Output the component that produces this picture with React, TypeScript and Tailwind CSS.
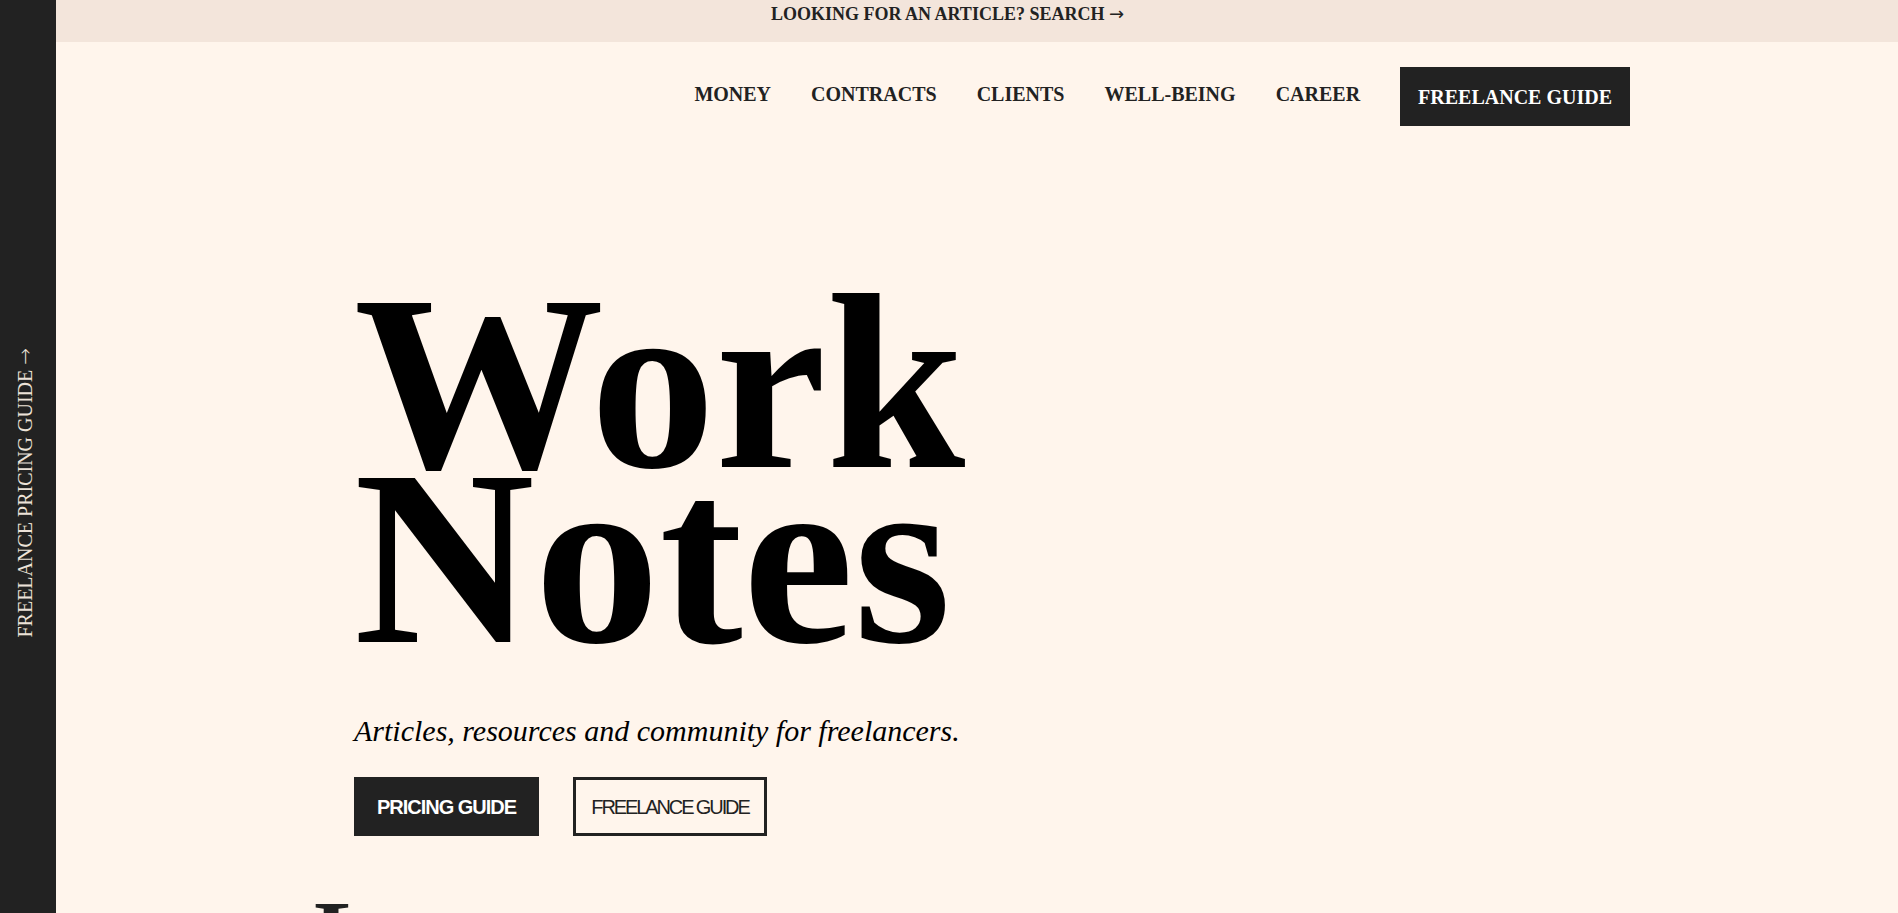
export default function App() {
  const links = ["MONEY", "CONTRACTS", "CLIENTS", "WELL-BEING", "CAREER"];
  return (
    <div className="relative h-screen overflow-hidden bg-[#fff5ec] font-['Liberation_Serif','Times_New_Roman',serif] text-[#222222]">
      {/* side tab */}
      <aside className="fixed left-0 top-0 z-10 flex h-screen w-[56px] items-center justify-center bg-[#222222] pr-[6px] pt-[72px]">
        <a className="rotate-180 text-[20px] leading-[24px] text-[#ece2d8] [writing-mode:vertical-rl]">
          FREELANCE PRICING GUIDE <span className="font-['DejaVu_Sans',sans-serif] font-light">→</span>
        </a>
      </aside>

      <div className="flex h-[42px] justify-center bg-[#f3e5db] pr-[3px]">
        <a className="text-[18px] font-bold leading-[27px] text-[#222222]">
          LOOKING FOR AN ARTICLE? SEARCH <span className="font-['DejaVu_Sans',sans-serif] font-normal">→</span>
        </a>
      </div>

      <header className="mx-auto flex max-w-[1362px] items-center justify-end gap-10 pt-[25px]">
        {links.map((l) => (
          <a key={l} className="pb-[6px] text-[20px] font-bold leading-[24px]">
            {l}
          </a>
        ))}
        <a className="flex h-[59px] items-center bg-[#222222] px-[18px] text-[20px] font-bold leading-[24px] text-white">
          FREELANCE GUIDE
        </a>
      </header>

      <main className="mx-auto max-w-[1190px] pt-[169px]">
        <h1 className="text-[250px] font-bold leading-[175px] text-black">
          Work
          <br />
          Notes
        </h1>
        <p className="mt-[63px] text-[30px] italic leading-[45px] text-black">
          Articles, resources and community for freelancers.
        </p>
        <div className="mt-[24px] flex gap-[34px]">
          <a className="flex h-[59px] w-[185px] items-center justify-center bg-[#222222] font-['Liberation_Sans',Arial,sans-serif] text-[20px] font-bold tracking-[-1px] text-white">
            PRICING GUIDE
          </a>
          <a className="flex h-[59px] w-[194px] items-center justify-center border-[3px] border-[#222222] font-['Liberation_Sans',Arial,sans-serif] text-[20px] tracking-[-2.1px] text-[#222222]">
            FREELANCE GUIDE
          </a>
        </div>
      </main>

      <section className="mx-auto mt-[51px] max-w-[1270px]">
        <h2 className="text-[96px] font-bold leading-none text-[#222222]">Latest</h2>
      </section>
    </div>
  );
}
